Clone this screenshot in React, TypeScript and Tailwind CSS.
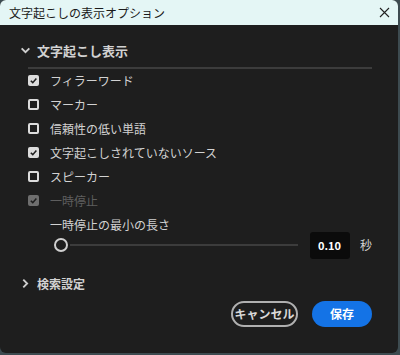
import React from "react";

const font = { fontFamily: '"Noto Sans CJK JP", "Noto Sans", sans-serif' };

// small checkbox used in the option list
const Box = ({ checked, disabled }: { checked?: boolean; disabled?: boolean }) => {
  if (checked) {
    return (
      <span
        className={`flex h-[11px] w-[11px] items-center justify-center rounded-[2px] ${
          disabled ? "bg-[#6e6e6e]" : "bg-[#dcdcdc]"
        }`}
      >
        <svg width="9" height="9" viewBox="0 0 10 10">
          <path d="M2 5.2 L4.2 7.4 L8.2 2.8" fill="none" stroke="#1e1e1e" strokeWidth="1.7" />
        </svg>
      </span>
    );
  }
  return <span className="h-[11px] w-[11px] rounded-[2px] border-2 border-[#dcdcdc]" />;
};

const rows = [
  { label: "フィラーワード", checked: true },
  { label: "マーカー" },
  { label: "信頼性の低い単語" },
  { label: "文字起こしされていないソース", checked: true },
  { label: "スピーカー" },
  { label: "一時停止", checked: true, disabled: true },
];

const Chevron = ({ down }: { down?: boolean }) => (
  <svg width="11" height="11" viewBox="0 0 10 10">
    <path
      d={down ? "M1.5 3 L5 6.5 L8.5 3" : "M3 1.5 L6.5 5 L3 8.5"}
      fill="none"
      stroke="#cfcfcf"
      strokeWidth="1.7"
    />
  </svg>
);

export default function App() {
  return (
    <div className="h-[355px] w-[400px] bg-[#3d4b50]" style={font}>
      <div className="flex h-[353px] w-[398px] flex-col overflow-hidden rounded-[6px] bg-[#1e1e1e]">
        {/* title bar */}
        <div className="flex h-[25px] items-center justify-between bg-[#e4f6f5] pl-[9px] pr-[8px] text-[12px] text-[#1a1a1a]">
          <span>文字起こしの表示オプション</span>
          <svg width="11" height="11" viewBox="0 0 11 11">
            <path d="M1 1 L10 10 M10 1 L1 10" stroke="#222" strokeWidth="1.1" />
          </svg>
        </div>

        <div className="flex flex-1 flex-col px-[16px] pt-[16px] text-[#d2d2d2]">
          <div className="flex items-center gap-[6px] pl-[4px] text-[13px] font-bold">
            <Chevron down />
            <span>文字起こし表示</span>
          </div>
          <div className="ml-[12px] mr-[10px] mt-[6px] h-[2px] bg-[#3c3c3c]" />

          <div className="flex flex-col pl-[12px]">
            {rows.map((r) => (
              <div key={r.label} className="flex h-[24px] items-center gap-[11px] text-[12px]">
                <Box checked={r.checked} disabled={r.disabled} />
                <span className={r.disabled ? "text-[#5e5e5e]" : ""}>{r.label}</span>
              </div>
            ))}
          </div>

          <div className="mt-[3px] pl-[34px] text-[12px]">一時停止の最小の長さ</div>
          <div className="-mt-[2px] flex items-center pl-[38px]">
            <div className="flex flex-1 items-center">
              <span className="h-[14px] w-[14px] rounded-full border-2 border-[#cfcfcf]" />
              <span className="ml-[2px] h-[2px] flex-1 bg-[#3c3c3c]" />
            </div>
            <div className="ml-[12px] flex h-[27px] w-[40px] items-center rounded-[3px] bg-[#0b0b0b] pl-[8px] text-[11px] font-bold text-white">
              0.10
            </div>
            <span className="ml-[10px] mr-[10px] text-[12px]">秒</span>
          </div>

          <div className="mt-[16px] flex items-center gap-[6px] pl-[4px] text-[12px] font-bold">
            <Chevron />
            <span>検索設定</span>
          </div>

          <div className="mt-[8px] flex justify-end gap-[14px] pr-[10px]">
            <button className="h-[26px] w-[67px] rounded-full border-2 border-[#b0b0b0] text-[12px] font-bold text-[#d8d8d8]">
              キャンセル
            </button>
            <button className="h-[26px] w-[60px] rounded-full bg-[#1473e6] text-[12px] font-bold text-white">
              保存
            </button>
          </div>
        </div>
      </div>
    </div>
  );
}
